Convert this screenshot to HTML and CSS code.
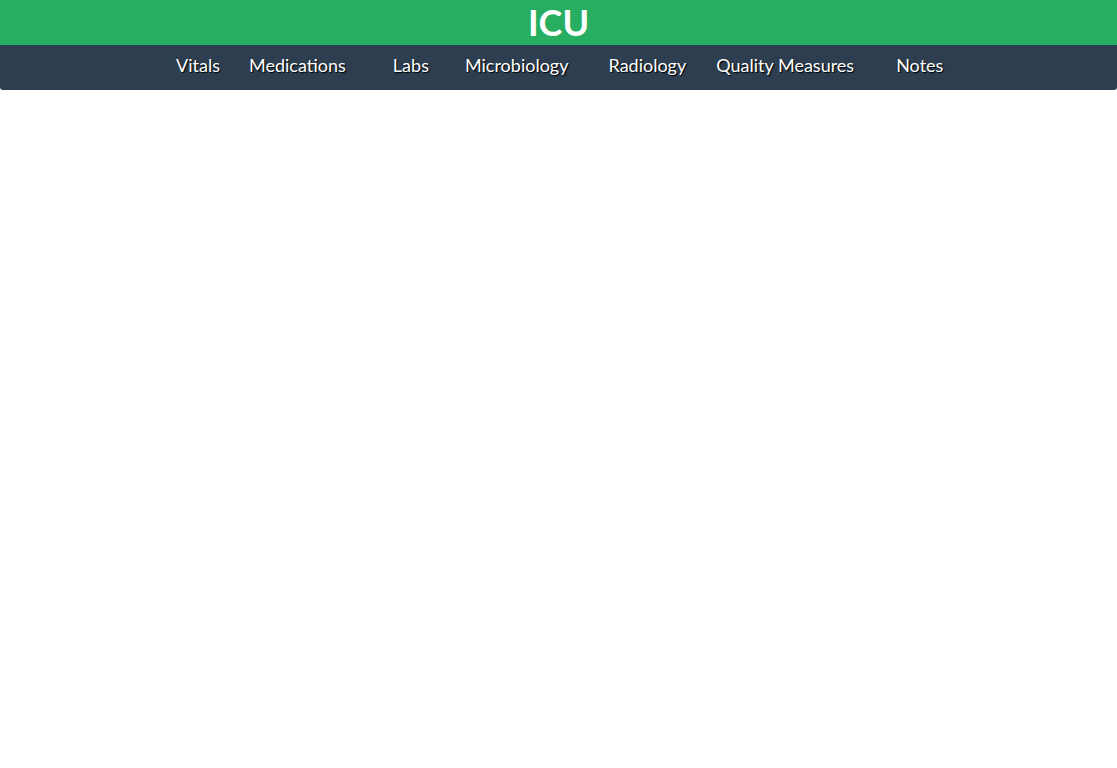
FILE: index.html
```html
<!DOCTYPE html>
<html lang="en">
<head>
<meta charset="utf-8">
<title>ICU</title>
<link rel="stylesheet" href="styles.css">
</head>
<body>
<header class="top">
  <h1 class="title">ICU</h1>
</header>
<nav class="nav">
  <ul class="nav-list">
    <li class="nav-item">Vitals</li>
    <li class="nav-item">Medications</li>
    <li class="nav-item">Labs</li>
    <li class="nav-item">Microbiology</li>
    <li class="nav-item">Radiology</li>
    <li class="nav-item">Quality Measures</li>
    <li class="nav-item">Notes</li>
  </ul>
</nav>
</body>
</html>
```
FILE: styles.css
```css
* { box-sizing: border-box; }
html, body { margin: 0; padding: 0; background: #fff; }
body { font-family: Lato, "Open Sans", sans-serif; }

.top {
  background: #27ae60;
  height: 45px;
  display: flex;
  align-items: center;
  justify-content: center;
}
.title {
  margin: 0;
  color: #fff;
  font-size: 36px;
  font-weight: 700;
  line-height: 45px;
}

.nav {
  background: #2c3e50;
  height: 45px;
  border-radius: 0 0 3px 3px;
}
.nav-list {
  list-style: none;
  margin: 0;
  padding: 0 0 6px 176px;
  height: 100%;
  display: flex;
  align-items: center;
}
.nav-item {
  color: #fff;
  font-size: 18px;
  white-space: nowrap;
  text-shadow: 1px 1px 1px #000;
  line-height: 30px;
}
.nav-item:nth-child(2) { margin-left: 29px; }
.nav-item:nth-child(3) { margin-left: 47px; }
.nav-item:nth-child(4) { margin-left: 36px; }
.nav-item:nth-child(5) { margin-left: 40px; }
.nav-item:nth-child(6) { margin-left: 30px; }
.nav-item:nth-child(7) { margin-left: 42px; }
```
